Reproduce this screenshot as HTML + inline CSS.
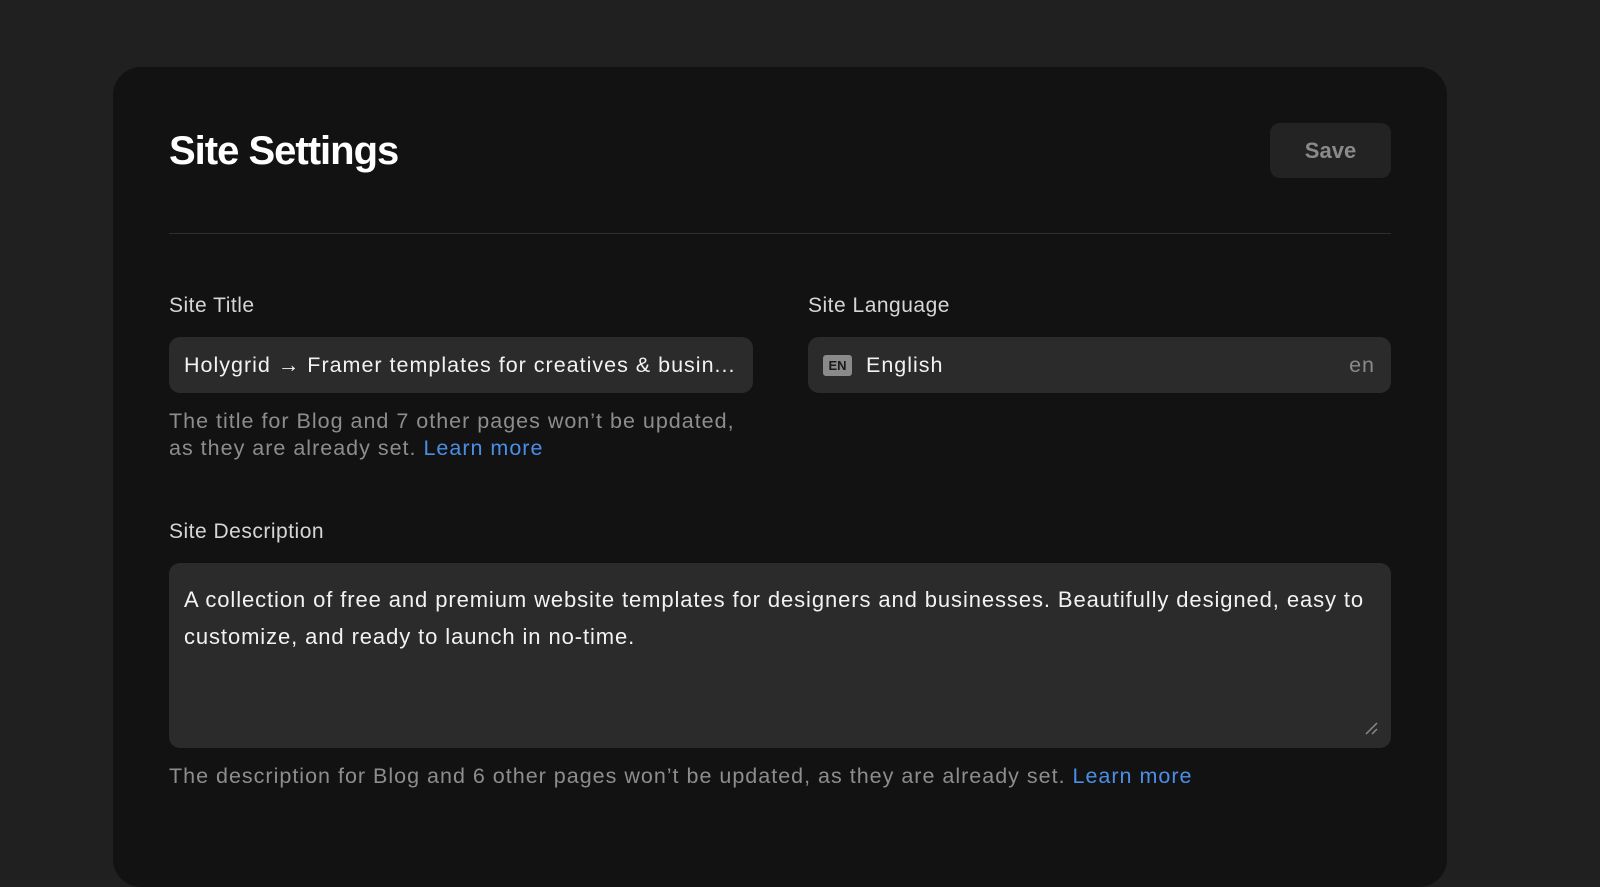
<!DOCTYPE html>
<html><head><meta charset="utf-8"><style>
*{box-sizing:border-box;margin:0;padding:0}
body{width:1600px;height:847px;background:#202020;font-family:"Liberation Sans",sans-serif;overflow:hidden;position:relative}
.card{position:absolute;left:113px;top:67px;width:1334px;height:820px;background:#121212;border-radius:28px}
h1{position:absolute;left:56px;top:62px;font-size:40px;font-weight:bold;color:#fff;letter-spacing:-1px}
.save{position:absolute;left:1157px;top:56px;width:121px;height:55px;background:#232323;border-radius:10px;color:#8a8a8a;font-size:22px;font-weight:bold;display:flex;align-items:center;justify-content:center}
.hr{position:absolute;left:56px;top:166px;width:1222px;height:1px;background:#2e2e2e}
.lbl{position:absolute;font-size:21px;color:#d6d6d6;letter-spacing:0.5px}
.inp{position:absolute;height:56px;background:#2b2b2b;border-radius:11px;color:#f2f2f2;font-size:21.5px;letter-spacing:1px;display:flex;align-items:center;padding-left:15px;white-space:nowrap;overflow:hidden}
.help{position:absolute;font-size:21.5px;color:#8d8d8d;line-height:27px;letter-spacing:1px;white-space:nowrap}
.help a{color:#4a8fe7;text-decoration:none}
.en{display:inline-block;width:29px;height:21px;background:#8a8a8a;color:#1a1a1a;font-size:13px;font-weight:bold;border-radius:3px;text-align:center;line-height:21px;margin-right:14px;letter-spacing:0}
</style></head><body>
<div class="card">
<h1>Site Settings</h1>
<div class="save">Save</div>
<div class="hr"></div>
<div class="lbl" style="left:56px;top:227px">Site Title</div>
<div class="inp" style="left:56px;top:270px;width:584px">Holygrid → Framer templates for creatives &amp; busin...</div>
<div class="help" style="left:56px;top:341px">The title for Blog and 7 other pages won’t be updated,<br>as they are already set. <a>Learn more</a></div>
<div class="lbl" style="left:695px;top:227px">Site Language</div>
<div class="inp" style="left:695px;top:270px;width:583px"><span class="en">EN</span>English<span style="position:absolute;right:16px;color:#8a8a8a">en</span></div>
<div class="lbl" style="left:56px;top:453px">Site Description</div>
<div class="inp" style="left:56px;top:496px;width:1222px;height:185px;align-items:flex-start;padding-top:18px;white-space:normal;line-height:37px;padding-right:6px;font-size:22px;letter-spacing:0.9px">A collection of free and premium website templates for designers and businesses. Beautifully designed, easy to customize, and ready to launch in no-time.
<svg style="position:absolute;right:13px;bottom:13px" width="14" height="14"><path d="M2 13L13 2M8 13L13 8" stroke="#888" stroke-width="1.5"/></svg></div>
<div class="help" style="left:56px;top:696px">The description for Blog and 6 other pages won’t be updated, as they are already set. <a>Learn more</a></div>
</div>
</body></html>
